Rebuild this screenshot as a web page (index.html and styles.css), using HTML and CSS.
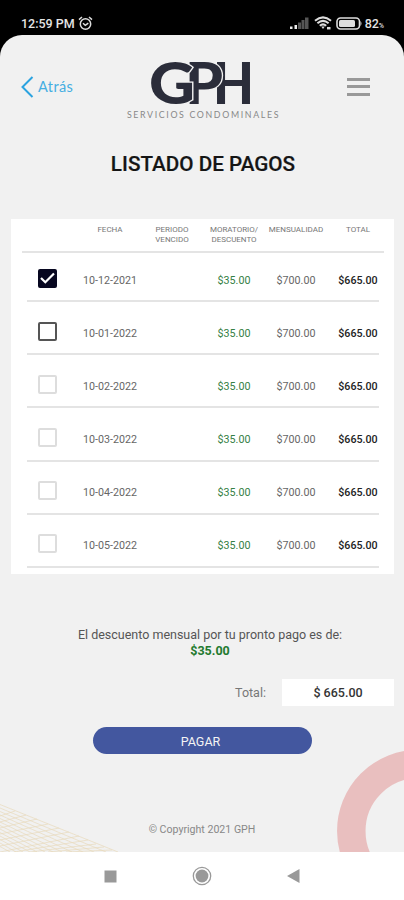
FILE: index.html
```
<!DOCTYPE html>
<html lang="es">
<head>
    <meta charset="UTF-8">
    <meta name="viewport" content="width=device-width, initial-scale=1.0">
    <title>Listado de pagos</title>
    <link rel="stylesheet" href="styles.css">
</head>
<body>
    <!-- Status bar -->
    <div class="status-bar">
        <span class="time">12:59 PM</span>
        <svg class="alarm" width="15" height="15" viewBox="0 0 15 15" fill="none" stroke="#ddd" stroke-width="1.5">
            <circle cx="7.5" cy="8" r="5.2"/>
            <path d="M1 3.6L4 1M14 3.6L11 1M5 7.3l2.300 2 3-2.200"/>
        </svg>
        <svg class="signal" width="19" height="12" viewBox="0 0 19 12">
            <path fill="#eee" d="M0 9.500h2.500V12H0zM4.500 8h2.500v4h-2.500z"/>
            <path fill="#555" d="M8 5.500h3V12H8zM11.500 3h3v9h-3zM15 0.500h3.500V12H15z"/>
        </svg>
        <svg class="wifi" width="18" height="14" viewBox="0 0 18 14" fill="none" stroke="#ddd" stroke-width="2">
            <path d="M1 4.700Q9-2 17 4.700M3.400 7.300Q9 2.500 14.600 7.300M5.800 9.800Q9 7 12.200 9.800"/>
            <path d="M7.200 10.600h3.600L9 13z" fill="#ddd" stroke="none"/>
            <path d="M13 12.200h3.500" stroke-width="2.500"/>
        </svg>
        <svg class="battery" width="27" height="13" viewBox="0 0 27 13">
            <rect x="1" y="1" width="22.500" height="11" rx="3.500" fill="none" stroke="#ddd" stroke-width="1.600"/>
            <rect x="3" y="3" width="16" height="7" rx="1.500" fill="#ddd"/>
            <path d="M24.500 4q2 2.500 0 5z" fill="#ddd"/>
        </svg>
        <span class="charge">82<small>%</small></span>
    </div>

    <div class="screen">
        <svg class="deco-lines" width="122" height="48" viewBox="0 0 122 48" fill="none" stroke="#e8dabb" stroke-width="0.700">
            <path d="M0 0.500L118 48M0 4L106 48M0 7.500L94 48M0 11L83 48M0 14.500L72 48M0 18L62 48M0 21.500L53 48M0 25L45 48M0 28.500L37 48M0 32L30 48M0 35.500L23 48M0 39L16 48M0 42.500L10 48"/>
            <path d="M0 12L15 7M0 18L26 11M0 24L37 15M0 30L48 20M0 36L59 24M0 42L69 28M0 48L79 32M14 48L88 36M30 48L96 40M48 48L104 43M66 48L112 46"/>
        </svg>
        <svg class="deco-ring" width="67" height="102" viewBox="0 0 67 102">
            <circle cx="81.300" cy="81" r="67" fill="none" stroke="#e9bfbf" stroke-width="28.500"/>
        </svg>

        <div class="header">
            <a class="back" href="#">
                <svg width="13" height="22" viewBox="0 0 13 22" fill="none" stroke="#2ba3e0" stroke-width="2">
                    <path d="M11.500 1L1.500 11l10 10"/>
                </svg>
                <span>Atrás</span>
            </a>
            <div class="logo">
                <svg width="104" height="46" viewBox="0 0 104 46">
                    <g class="letters">
                        <text x="63" y="44" textLength="41" lengthAdjust="spacingAndGlyphs">H</text>
                        <text class="cut" x="35" y="44" textLength="38" lengthAdjust="spacingAndGlyphs">P</text>
                        <text class="cut" x="-1" y="44" textLength="46" lengthAdjust="spacingAndGlyphs">G</text>
                    </g>
                </svg>
                <div class="tagline">SERVICIOS CONDOMINALES</div>
            </div>
            <div class="menu">
                <i></i>
                <i></i>
                <i></i>
            </div>
        </div>

        <h1>LISTADO DE PAGOS</h1>

        <!-- Payments -->
        <div class="card">
            <div class="row head">
                <span></span>
                <span>FECHA</span>
                <span>PERIODO VENCIDO</span>
                <span>MORATORIO/ DESCUENTO</span>
                <span>MENSUALIDAD</span>
                <span>TOTAL</span>
            </div>
            <div class="row">
                <span class="check checked">
                    <svg width="15" height="12" viewBox="0 0 15 12" fill="none" stroke="#fff" stroke-width="2.200"><path d="M1 6l4.300 4.300L14 1.500"/></svg>
                </span>
                <span>10-12-2021</span><span></span><span class="discount">$35.00</span><span>$700.00</span><span class="total">$665.00</span>
            </div>
            <div class="row">
                <span class="check enabled"></span>
                <span>10-01-2022</span><span></span><span class="discount">$35.00</span><span>$700.00</span><span class="total">$665.00</span>
            </div>
            <div class="row">
                <span class="check"></span>
                <span>10-02-2022</span><span></span><span class="discount">$35.00</span><span>$700.00</span><span class="total">$665.00</span>
            </div>
            <div class="row">
                <span class="check"></span>
                <span>10-03-2022</span><span></span><span class="discount">$35.00</span><span>$700.00</span><span class="total">$665.00</span>
            </div>
            <div class="row">
                <span class="check"></span>
                <span>10-04-2022</span><span></span><span class="discount">$35.00</span><span>$700.00</span><span class="total">$665.00</span>
            </div>
            <div class="row">
                <span class="check"></span>
                <span>10-05-2022</span><span></span><span class="discount">$35.00</span><span>$700.00</span><span class="total">$665.00</span>
            </div>
        </div>

        <p class="note">El descuento mensual por tu pronto pago es de: <b>$35.00</b></p>

        <div class="sum">
            <span class="sum-label">Total:</span>
            <span class="sum-value">$ 665.00</span>
        </div>

        <button class="pay">PAGAR</button>
        <div class="copyright">© Copyright 2021 GPH</div>
    </div>

    <!-- Android navigation -->
    <div class="nav-bar">
        <svg width="13" height="13"><rect x="0.500" y="0.500" width="12" height="12" fill="#999"/></svg>
        <svg width="20" height="20" viewBox="0 0 20 20">
            <circle cx="10" cy="10" r="8.700" fill="none" stroke="#999" stroke-width="1.300"/>
            <circle cx="10" cy="10" r="6.400" fill="#999"/>
        </svg>
        <svg width="13" height="14"><path d="M12.500 0v14L0 7z" fill="#999"/></svg>
    </div>
</body>
</html>
```
FILE: styles.css
```
* {
    box-sizing: border-box;
}
body {
    margin: 0;
    height: 900px;
    display: flex;
    flex-direction: column;
    background: #000;
    font-family: Roboto, Arial, sans-serif;
    overflow: hidden;
}
.status-bar {
    height: 35px;
    padding: 11px 20px 0 21px;
    display: flex;
    align-items: center;
    color: #e4e4e4;
    font-size: 12.5px;
    font-weight: 500;
}
.time {
    letter-spacing: 0;
}
.alarm {
    margin-left: 3px;
}
.signal {
    margin-left: auto;
}
.wifi {
    margin-left: 5px;
}
.battery {
    margin-left: 4px;
}
.charge {
    margin-left: 2px;
}
.charge small {
    font-size: 7px;
}
.screen {
    position: relative;
    height: 817px;
    background: #f1f1f1;
    border-radius: 22px 22px 0 0;
    overflow: hidden;
    display: flex;
    flex-direction: column;
}
.deco-lines {
    position: absolute;
    left: 0;
    bottom: 0;
}
.deco-ring {
    position: absolute;
    right: 0;
    bottom: 0;
}
.header {
    height: 85px;
    padding: 0 34px 0 21px;
    display: grid;
    grid-template-columns: 100px 1fr 100px;
}
.back {
    display: flex;
    align-items: center;
    gap: 4px;
    height: 22px;
    margin-top: 41px;
    color: #45aee2;
    font-family: Lato, sans-serif;
    font-size: 14.5px;
    letter-spacing: 0.4px;
    text-decoration: none;
}
.back span {
    margin-top: -2px;
}
.logo {
    display: flex;
    flex-direction: column;
    align-items: center;
    padding-top: 25px;
    margin: 0 -20px 0 -7px;
}
.logo svg {
    overflow: visible;
}
.letters {
    font-family: Lato, sans-serif;
    font-size: 58px;
    font-weight: 900;
    fill: #2b2d3a;
}
.cut {
    stroke: #f1f1f1;
    stroke-width: 2.5px;
    paint-order: stroke;
}
.tagline {
    margin: 3px 0 0 3px;
    font-family: Lato, sans-serif;
    font-size: 8.8px;
    line-height: 11px;
    letter-spacing: 1.65px;
    color: #888;
    white-space: nowrap;
}
.menu {
    justify-self: end;
    width: 23px;
    margin-top: 43px;
}
.menu i {
    display: block;
    height: 3px;
    margin-bottom: 4.3px;
    background: #999;
}
h1 {
    margin: 32px 0 0 2px;
    text-align: center;
    font-size: 20.7px;
    line-height: 24px;
    font-weight: 500;
    color: #151515;
    -webkit-text-stroke: 0.2px #151515;
}
.card {
    width: 383px;
    height: 355px;
    margin: 43px 0 0 11px;
    background: #fff;
}
.row {
    display: grid;
    grid-template-columns: 52px repeat(5, 62px);
    align-items: center;
    height: 53.2px;
    margin: 0 15px 0 16px;
    padding-top: 11px;
    border-bottom: 2px solid #e4e4e4;
    text-align: center;
    font-size: 10.7px;
    color: #666;
}
.row.head {
    grid-template-columns: 57px repeat(5, 62px);
    align-items: start;
    height: 34px;
    margin: 0 10px 0 11px;
    padding-top: 6px;
    font-size: 8px;
    line-height: 10px;
    color: #777;
}
.row.head + .row {
    height: 49px;
    padding-top: 7px;
}
.check {
    display: flex;
    align-items: center;
    justify-content: center;
    width: 19px;
    height: 19px;
    margin: -4px 0 0 11px;
    border: 2px solid #ddd;
    border-radius: 2px;
}
.check.enabled {
    border-color: #555;
}
.check.checked {
    background: #070720;
    border-color: #070720;
}
.check svg {
    flex: none;
}
.discount {
    color: #358045;
}
.total {
    color: #222;
    font-weight: 500;
}
.note {
    width: 280px;
    margin: 53px 0 0 70px;
    text-align: center;
    font-size: 12.5px;
    line-height: 16px;
    color: #555;
}
.note b {
    display: block;
    color: #237a2f;
}
.sum {
    display: flex;
    justify-content: flex-end;
    align-items: center;
    margin: 20px 10px 0 0;
}
.sum-label {
    margin-right: 16px;
    font-size: 12.5px;
    color: #777;
}
.sum-value {
    width: 112px;
    height: 27px;
    line-height: 27px;
    background: #fff;
    text-align: center;
    font-size: 12.5px;
    font-weight: 500;
    color: #333;
}
.pay {
    width: 219px;
    height: 27px;
    margin: 21px 0 0 93px;
    padding: 2px 4px 0 0;
    border: none;
    border-radius: 14px;
    background: #43579f;
    color: #f4f4f4;
    font-family: inherit;
    font-size: 12.5px;
    text-align: center;
}
.copyright {
    margin-top: 69px;
    text-align: center;
    font-size: 10.6px;
    line-height: 14px;
    color: #888;
}
.nav-bar {
    height: 48px;
    display: flex;
    justify-content: center;
    align-items: center;
    gap: 75px;
    background: #fff;
}
```
